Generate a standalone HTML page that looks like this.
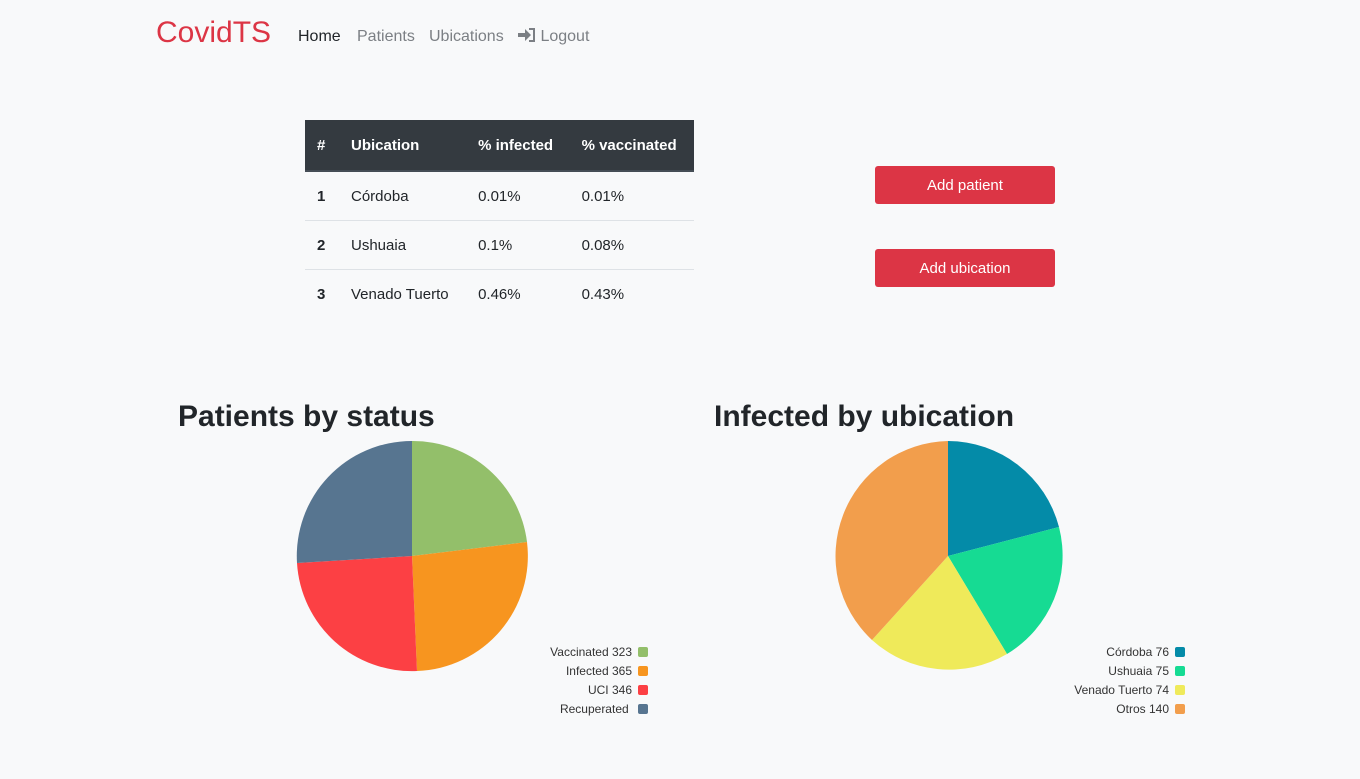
<!DOCTYPE html>
<html><head><meta charset="utf-8"><style>
body{margin:0;background:#f8f9fa;font-family:"Liberation Sans",sans-serif;width:1360px;height:779px;overflow:hidden;position:relative;color:#212529}
.a{position:absolute;white-space:nowrap}
.nav{font-size:16px;color:#7b7f84;top:28px}
table{position:absolute;left:305px;top:120px;width:389px;border-collapse:collapse;font-size:15px}
th{background:#343a40;color:#fff;height:50px;text-align:left;padding:0 12px;font-weight:bold;border-bottom:2px solid #454d55}
td{height:48px;padding:0 12px;border-top:1px solid #dee2e6}
tr:first-child+tr td{border-top:none}
.btn{position:absolute;left:875px;width:180px;height:38px;background:#dc3545;color:#fff;border-radius:3px;font-size:15px;text-align:center;line-height:40px}
h2{position:absolute;margin:0;font-size:30px;font-weight:bold;color:#212529}
.lg{position:absolute;font-size:12px;color:#333;text-align:right;line-height:19px}
.lg span{display:inline-block;width:10px;height:10px;border-radius:2px;margin-left:6px;vertical-align:-1px}
</style></head><body>
<div class="a" style="left:156px;top:16px;font-size:30px;color:#dc3545">CovidTS</div>
<div class="a nav" style="left:298px;color:#212529">Home</div>
<div class="a nav" style="left:357px">Patients</div>
<div class="a nav" style="left:429px">Ubications</div>
<div class="a nav" style="left:518px"><svg width="18" height="14" viewBox="0 0 18 14" style="vertical-align:-1px"><path d="M0 5h7V1l6 6-6 6V9H0z" fill="#7b7f84"/><path d="M11 1h5v12h-5" stroke="#7b7f84" stroke-width="2" fill="none"/></svg> Logout</div>
<table>
<tr><th style="width:10px">#</th><th>Ubication</th><th>% infected</th><th>% vaccinated</th></tr>
<tr><td><b>1</b></td><td>Córdoba</td><td>0.01%</td><td>0.01%</td></tr>
<tr><td><b>2</b></td><td>Ushuaia</td><td>0.1%</td><td>0.08%</td></tr>
<tr><td><b>3</b></td><td>Venado Tuerto</td><td>0.46%</td><td>0.43%</td></tr>
</table>
<div class="btn" style="top:166px">Add patient</div>
<div class="btn" style="top:249px">Add ubication</div>
<h2 style="left:178px;top:400px">Patients by status</h2>
<h2 style="left:714px;top:400px">Infected by ubication</h2>
<svg class="a" style="left:0;top:0" width="1360" height="779">
<path d="M412 556L412 441A115 115 0 0 1 527 542Z" fill="#93bf6a"/>
<path d="M412 556L527 542A115 115 0 0 1 417 671Z" fill="#f7951f"/>
<path d="M412 556L417 671A115 115 0 0 1 297 563Z" fill="#fc4044"/>
<path d="M412 556L297 563A115 115 0 0 1 412 441Z" fill="#577590"/>
<path d="M948 556L948 441A115 115 0 0 1 1059 527Z" fill="#048ba8"/>
<path d="M948 556L1059 527A115 115 0 0 1 1007 654Z" fill="#16db93"/>
<path d="M948 556L1007 654A115 115 0 0 1 872 640Z" fill="#efea5a"/>
<path d="M948 556L872 640A115 115 0 0 1 948 441Z" fill="#f29e4c"/>
</svg>
<div class="lg" style="right:712px;top:643px">Vaccinated 323<span style="background:#93bf6a"></span><br>Infected 365<span style="background:#f7951f"></span><br>UCI 346<span style="background:#fc4044"></span><br>Recuperated <span style="background:#577590"></span></div>
<div class="lg" style="right:175px;top:643px">Córdoba 76<span style="background:#048ba8"></span><br>Ushuaia 75<span style="background:#16db93"></span><br>Venado Tuerto 74<span style="background:#efea5a"></span><br>Otros 140<span style="background:#f29e4c"></span></div>
</body></html>
